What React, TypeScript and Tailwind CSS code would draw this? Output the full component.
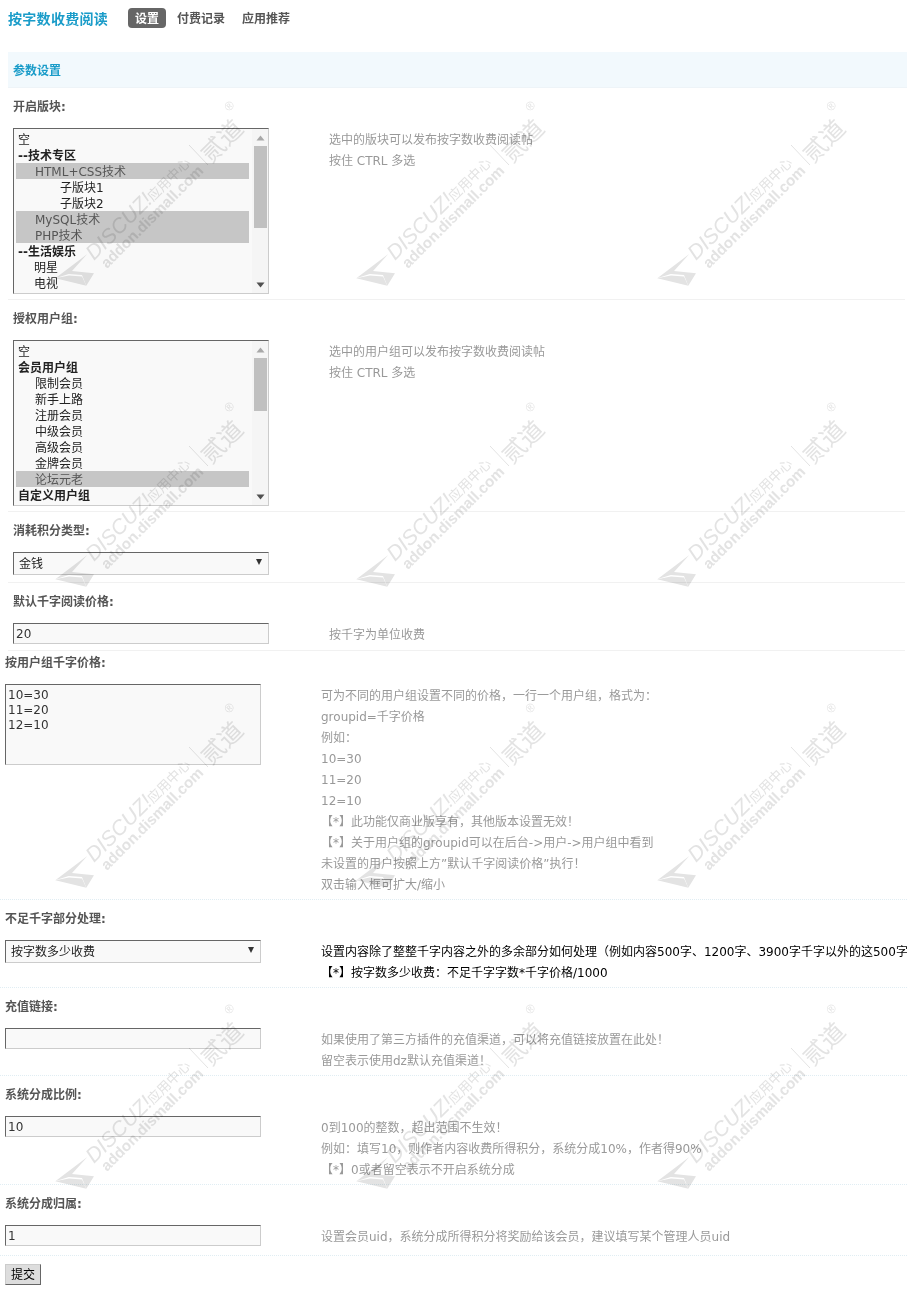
import React from "react";

type Item = { t: string; pl?: string; b?: boolean; s?: boolean };

const forums: Item[] = [
  { t: "空", pl: "pl-[2px]" },
  { t: "--技术专区", pl: "pl-[2px]", b: true },
  { t: "HTML+CSS技术", pl: "pl-[19px]", s: true },
  { t: "子版块1", pl: "pl-[44px]" },
  { t: "子版块2", pl: "pl-[44px]" },
  { t: "MySQL技术", pl: "pl-[19px]", s: true },
  { t: "PHP技术", pl: "pl-[19px]", s: true },
  { t: "--生活娱乐", pl: "pl-[2px]", b: true },
  { t: "明星", pl: "pl-[18px]" },
  { t: "电视", pl: "pl-[18px]" },
];

const groups: Item[] = [
  { t: "空", pl: "pl-[2px]" },
  { t: "会员用户组", pl: "pl-[2px]", b: true },
  { t: "限制会员", pl: "pl-[19px]" },
  { t: "新手上路", pl: "pl-[19px]" },
  { t: "注册会员", pl: "pl-[19px]" },
  { t: "中级会员", pl: "pl-[19px]" },
  { t: "高级会员", pl: "pl-[19px]" },
  { t: "金牌会员", pl: "pl-[19px]" },
  { t: "论坛元老", pl: "pl-[19px]", s: true },
  { t: "自定义用户组", pl: "pl-[2px]", b: true },
];

const boxBorder = "border border-t-[#666] border-l-[#666] border-r-[#ccc] border-b-[#ccc]";

function ListBox({ items, thumb }: { items: Item[]; thumb: string }) {
  return (
    <div className={`w-[256px] h-[166px] shrink-0 flex bg-[#f9f9f9] overflow-hidden ${boxBorder}`}>
      <div className="w-[235px] pl-[2px] pt-[2px] shrink-0">
        {items.map((it) => (
          <div
            key={it.t}
            className={`h-4 leading-[18px] ${it.pl} ${it.b ? "font-bold text-[#222]" : "text-[#222]"} ${it.s ? "bg-[#c6c6c6] text-[#555]" : ""}`}
          >
            {it.t}
          </div>
        ))}
      </div>
      <div className="flex-1 flex flex-col items-center bg-[#f5f5f5] ml-[3px]">
        <div className="h-[17px] flex items-center justify-center shrink-0">
          <svg width="9" height="6" viewBox="0 0 9 6">
            <path d="M4.5 0.5 L8.5 5.5 L0.5 5.5 Z" fill="#a8a8a8" />
          </svg>
        </div>
        <div className={`w-[13px] bg-[#c0c0c0] shrink-0 ${thumb}`} />
        <div className="flex-1" />
        <div className="h-[17px] flex items-center justify-center shrink-0">
          <svg width="9" height="6" viewBox="0 0 9 6">
            <path d="M0.5 0.5 L8.5 0.5 L4.5 5.5 Z" fill="#505050" />
          </svg>
        </div>
      </div>
    </div>
  );
}

function SelectBox({ value }: { value: string }) {
  return (
    <div className={`w-[256px] h-[23px] shrink-0 flex items-center bg-[#f9f9f9] pl-[5px] pr-[6px] ${boxBorder}`}>
      <span className="flex-1 text-[#222]">{value}</span>
      <svg className="mb-[3px]" width="6" height="6" viewBox="0 0 6 6">
        <path d="M0 0 L6 0 L3 6 Z" fill="#333" />
      </svg>
    </div>
  );
}

function TextInput({ value }: { value: string }) {
  return (
    <input
      readOnly
      defaultValue={value}
      className={`w-[256px] h-[21px] shrink-0 bg-[#f9f9f9] px-[2px] text-[#333] outline-none ${boxBorder}`}
    />
  );
}

function Help({ lines, black }: { lines: React.ReactNode[]; black?: boolean }) {
  return (
    <div className={`ml-[60px] mt-px whitespace-nowrap ${black ? "text-black" : "text-[#999]"}`}>
      {lines.map((l, i) => (
        <div key={i} className="h-[21px] leading-[23px]">
          {l}
        </div>
      ))}
    </div>
  );
}

function Row({
  label,
  inset,
  pb,
  compact,
  children,
}: {
  label: string;
  inset?: boolean;
  pb: string;
  compact?: boolean;
  children: React.ReactNode;
}) {
  return (
    <div
      className={
        inset
          ? `ml-2 mr-[2px] pl-[5px] border-b border-[#f1f1f1] ${pb}`
          : `pl-[5px] border-b border-dotted border-[#e0edf3] ${pb}`
      }
    >
      {compact ? (
        <div className="h-[22px] leading-[24px] mb-[11px] font-bold text-[#555]">{label}</div>
      ) : (
        <div className="h-9 leading-[38px] mb-1 font-bold text-[#555]">{label}</div>
      )}
      <div className="flex items-start">{children}</div>
    </div>
  );
}

function Watermark() {
  return (
    <svg className="absolute inset-0 w-full h-full pointer-events-none mix-blend-multiply" aria-hidden="true">
      <defs>
        <pattern id="wm" width="301" height="301" patternUnits="userSpaceOnUse" patternTransform="translate(53 98)">
          <g fill="#e3e3e3">
            <path d="M2.3 180.3 L34.3 156 L19 173 L41 175.3 L33.3 187.7 L29 177 L15.7 176 Z" />
            <path d="M2.3 180.3 L16 177.5 L29 178.5 L33.3 187.7 Z" />
            <text
              transform="translate(41 163) rotate(-45)"
              fontFamily="'Liberation Sans', sans-serif"
              fontStyle="italic"
              fontSize="21"
            >
              DISCUZ!
            </text>
            <text
              transform="translate(100 104) rotate(-45)"
              fontFamily="'Noto Sans CJK SC', sans-serif"
              fontSize="13.5"
            >
              应用中心
            </text>
            <text
              transform="translate(158 66) rotate(-45)"
              fontFamily="'Noto Sans CJK SC', sans-serif"
              fontSize="24"
            >
              贰道
            </text>
            <text
              transform="translate(54 171) rotate(-45)"
              fontFamily="'Liberation Sans', sans-serif"
              fontWeight="bold"
              fontSize="15.2"
            >
              addon.dismall.com
            </text>
            <text
              transform="translate(176 14) rotate(-45)"
              fontFamily="'Liberation Sans', sans-serif"
              fontSize="12"
            >
              ®
            </text>
          </g>
          <path d="M136 47 L155 67" stroke="#e3e3e3" strokeWidth="1" />
        </pattern>
      </defs>
      <rect width="100%" height="100%" fill="url(#wm)" />
    </svg>
  );
}

export default function App() {
  return (
    <div className="relative w-full h-[1298px] overflow-hidden bg-white text-xs font-['DejaVu_Sans','Noto_Sans_CJK_SC',sans-serif]">
      <div className="h-[52px] pt-2 pl-2 flex items-start">
        <div className="text-sm leading-[22px] font-bold tracking-[0.3px] text-[#1a9cc9] w-[120px]">按字数收费阅读</div>
        <div className="h-5 leading-[22px] px-[7px] rounded-[4px] bg-[#666] text-white font-bold">设置</div>
        <div className="h-5 leading-[22px] px-[7px] ml-1 font-bold text-[#555]">付费记录</div>
        <div className="h-5 leading-[22px] px-[7px] ml-[3px] font-bold text-[#555]">应用推荐</div>
      </div>

      <div className="ml-2 h-9 leading-[38px] pl-[5px] bg-[#f2f9fd] border-b border-[#eef4f8] font-bold text-[#1a9cc9]">参数设置</div>

      <Row label="开启版块:" inset pb="pb-[5px]">
        <ListBox items={forums} thumb="h-[82px]" />
        <Help lines={["选中的版块可以发布按字数收费阅读帖", "按住 CTRL 多选"]} />
      </Row>

      <Row label="授权用户组:" inset pb="pb-[5px]">
        <ListBox items={groups} thumb="h-[53px]" />
        <Help lines={["选中的用户组可以发布按字数收费阅读帖", "按住 CTRL 多选"]} />
      </Row>

      <Row label="消耗积分类型:" inset pb="pb-[7px]">
        <SelectBox value="金钱" />
      </Row>

      <Row label="默认千字阅读价格:" inset pb="pb-[5px]">
        <TextInput value="20" />
        <Help lines={["按千字为单位收费"]} />
      </Row>

      <Row label="按用户组千字价格:" compact pb="pb-[4px]">
        <textarea
          readOnly
          defaultValue={"10=30\n11=20\n12=10"}
          className={`w-[256px] h-[81px] shrink-0 resize-none bg-[#f9f9f9] px-[2px] pt-[3px] leading-[15px] text-[#333] outline-none ${boxBorder}`}
        />
        <Help
          lines={[
            "可为不同的用户组设置不同的价格，一行一个用户组，格式为：",
            "groupid=千字价格",
            "例如：",
            "10=30",
            "11=20",
            "12=10",
            "【*】此功能仅商业版享有，其他版本设置无效！",
            "【*】关于用户组的groupid可以在后台->用户->用户组中看到",
            "未设置的用户按照上方”默认千字阅读价格”执行！",
            "双击输入框可扩大/缩小",
          ]}
        />
      </Row>

      <Row label="不足千字部分处理:" pb="pb-[4px]">
        <SelectBox value="按字数多少收费" />
        <Help
          black
          lines={[
            "设置内容除了整整千字内容之外的多余部分如何处理（例如内容500字、1200字、3900字千字以外的这500字",
            "【*】按字数多少收费：不足千字字数*千字价格/1000",
          ]}
        />
      </Row>

      <Row label="充值链接:" pb="pb-[4px]">
        <TextInput value="" />
        <Help lines={["如果使用了第三方插件的充值渠道，可以将充值链接放置在此处！", "留空表示使用dz默认充值渠道！"]} />
      </Row>

      <Row label="系统分成比例:" pb="pb-[4px]">
        <TextInput value="10" />
        <Help
          lines={[
            "0到100的整数，超出范围不生效！",
            "例如：填写10，则作者内容收费所得积分，系统分成10%，作者得90%",
            "【*】0或者留空表示不开启系统分成",
          ]}
        />
      </Row>

      <Row label="系统分成归属:" pb="pb-2">
        <TextInput value="1" />
        <Help lines={["设置会员uid，系统分成所得积分将奖励给该会员，建议填写某个管理人员uid"]} />
      </Row>

      <button className="block ml-[5px] mt-2 w-9 h-[21px] bg-[#ddd] border border-t-[#ccc] border-l-[#ccc] border-r-[#666] border-b-[#666] text-black">
        提交
      </button>

      <Watermark />
    </div>
  );
}
